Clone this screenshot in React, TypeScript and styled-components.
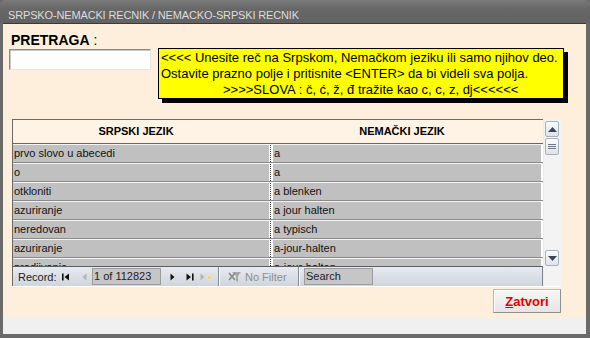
import React from "react";
import styled, { createGlobalStyle } from "styled-components";

const Global = createGlobalStyle`
  html, body { margin: 0; padding: 0; background: #6b6b6b; }
  body { font-family: "Liberation Sans", Arial, sans-serif; }
`;

const Window = styled.div`
  width: 590px;
  height: 338px;
  display: flex;
  flex-direction: column;
  background: #6a6a6a;
  border-radius: 5px 5px 0 0;
  overflow: hidden;
`;

const TitleBar = styled.div`
  height: 23px;
  box-sizing: border-box;
  padding: 9px 0 0 8px;
  font-size: 11px;
  letter-spacing: -0.15px;
  line-height: 13px;
  color: #dcdcdc;
  background: linear-gradient(#7a7a7a, #676767 40%, #626262);
  white-space: nowrap;
`;

const Client = styled.div`
  flex: 1;
  display: flex;
  flex-direction: column;
  margin: 0 4px 4px 3px;
  border-top: 1px solid #3a3a3a;
`;

const Content = styled.div`
  flex: 1;
  display: flex;
  flex-direction: column;
  background: #fdefdc;
  padding-top: 8px;
`;

const Footer = styled.div`
  height: 16px;
  background: #f0f0f0;
`;

const TopRow = styled.div`
  display: flex;
  align-items: flex-start;
  margin-left: 6px;
`;

const LeftCol = styled.div`
  width: 142px;
  display: flex;
  flex-direction: column;
`;

const Label = styled.div`
  margin-left: 2px;
  height: 16px;
  font-size: 14px;
  line-height: 16px;
  color: #000;
  white-space: nowrap;
  b { font-weight: bold; }
`;

const SearchInput = styled.input`
  margin-top: 1px;
  width: 142px;
  height: 21px;
  box-sizing: border-box;
  border: 1px solid #e4e4e4;
  border-top-color: #8a8a8a;
  border-left-color: #8a8a8a;
  box-shadow: inset 1px 1px 0 #c8c8c8;
  background: #fff;
  outline: none;
  padding: 0 2px;
  font: 12px "Liberation Sans", Arial, sans-serif;
`;

const Notice = styled.div`
  margin: 16px 0 0 7px;
  width: 406px;
  box-sizing: border-box;
  border: 1px solid #000;
  background: #ffff00;
  box-shadow: 4px 4px 0 #000;
  padding: 1px 0 0 2px;
  font-size: 13px;
  line-height: 16px;
  color: #000;
`;

const NoticeLine = styled.div<{ $indent?: number }>`
  white-space: pre;
  padding-left: ${(p) => p.$indent ?? 0}px;
`;

const Sheet = styled.div`
  margin: 20px 0 0 9px;
  width: 549px;
  display: flex;
  border-bottom: 1px solid #ffffff;
`;

const Grid = styled.div`
  width: 531px;
  display: flex;
  flex-direction: column;
  border-left: 1px solid #6a6a6a;
  border-top: 1px solid #6a6a6a;
  box-sizing: border-box;
`;

const cols = "256px 4px 268px 2px";

const Header = styled.div`
  display: grid;
  grid-template-columns: ${cols};
  height: 24px;
  box-sizing: border-box;
  border-bottom: 1px solid #666;
  background: #fef3e4;
`;

const HeadCell = styled.div`
  font-size: 11px;
  font-weight: bold;
  line-height: 23px;
  text-align: center;
  padding-right: 10px;
  color: #000;
  white-space: nowrap;
`;

const Rows = styled.div`
  height: 122px;
  overflow: hidden;
  background: #fff;
`;

const Row = styled.div`
  display: grid;
  grid-template-columns: ${cols};
  height: 19px;
  box-sizing: border-box;
  border-bottom: 1px solid #8a8a8a;
  border-top: 1px solid #f4f4f4;
`;

const Cell = styled.div`
  background: #c0c0c0;
  font-size: 11px;
  line-height: 17px;
  padding-left: 1px;
  color: #111;
  white-space: nowrap;
  overflow: hidden;
`;

const ColSep = styled.div`
  background: linear-gradient(to right, #fff 0 1px, transparent 1px 2px, #fff 2px),
    repeating-linear-gradient(to bottom, #333 0 1px, #fff 1px 2px);
`;

const Tail = styled.div`
  background: #fff;
`;

const NavBar = styled.div`
  height: 20px;
  box-sizing: border-box;
  display: flex;
  align-items: center;
  border-top: 1px solid #5e5e5e;
  border-right: 1px solid #7d8590;
  background: linear-gradient(#e7eaef, #d0d5dc);
  font-size: 11px;
  color: #222;
  white-space: nowrap;
  position: relative;
  z-index: 1;
`;

const RecLabel = styled.div`
  margin-left: 5px;
  width: 44px;
`;

const Glyph = styled.svg<{ $ml: number }>`
  margin-left: ${(p) => p.$ml}px;
  flex: none;
  display: block;
`;

const NavBox = styled.div<{ $ml: number; $w: number }>`
  margin-left: ${(p) => p.$ml}px;
  width: ${(p) => p.$w}px;
  height: 17px;
  box-sizing: border-box;
  border: 1px solid #9d9d9d;
  background: #c6c6c6;
  padding-left: 1px;
  line-height: 15px;
  color: #222;
`;

const NavSep = styled.div<{ $ml: number }>`
  margin-left: ${(p) => p.$ml}px;
  width: 2px;
  height: 19px;
  box-sizing: border-box;
  border-left: 1px solid #858b94;
  border-right: 1px solid #f6f7f9;
`;

const Disabled = styled.div`
  margin-left: 3px;
  width: 53px;
  color: #8e8e8e;
`;

const Scroll = styled.div`
  width: 18px;
  display: flex;
  flex-direction: column;
  background: #f3f3f3;
  border-left: 1px solid #ececec;
  box-sizing: border-box;
`;

const ScrollBtn = styled.div<{ $mt: number; $h: number }>`
  margin: ${(p) => p.$mt}px 0 0 1px;
  width: 14px;
  height: ${(p) => p.$h}px;
  box-sizing: border-box;
  border: 1px solid #a7b0bc;
  border-radius: 2px;
  background: linear-gradient(#fafbfc, #dfe3e9);
  display: flex;
  align-items: center;
  justify-content: center;
`;

const Spacer = styled.div`
  flex: 1;
`;

const ScrollFoot = styled.div`
  height: 20px;
`;

const CloseButton = styled.button`
  align-self: flex-end;
  margin: 2px 25px 0 0;
  width: 68px;
  height: 24px;
  box-sizing: border-box;
  border: 1px solid #b9b9b9;
  border-bottom-color: #8f8f8f;
  border-right-color: #8f8f8f;
  box-shadow: inset 1px 1px 0 #fff;
  background: linear-gradient(#f7f7f7, #e5e5e5);
  color: #e00000;
  font: bold 13px "Liberation Sans", Arial, sans-serif;
  padding: 0;
  u { text-decoration: underline; }
`;

const rows: [string, string][] = [
  ["prvo slovo u abecedi", "a"],
  ["o", "a"],
  ["otkloniti", "a blenken"],
  ["azuriranje", "a jour halten"],
  ["neredovan", "a typisch"],
  ["azuriranje", "a-jour-halten"],
  ["prodjivanje", "a-jour-halten"],
];

export default function App() {
  return (
    <>
      <Global />
      <Window>
        <TitleBar>SRPSKO-NEMACKI RECNIK / NEMACKO-SRPSKI RECNIK</TitleBar>
        <Client>
          <Content>
            <TopRow>
              <LeftCol>
                <Label>
                  <b>PRETRAGA</b> :
                </Label>
                <SearchInput type="text" />
              </LeftCol>
              <Notice>
                <NoticeLine>{"<<<< Unesite reč na Srpskom, Nemačkom jeziku ili samo njihov deo."}</NoticeLine>
                <NoticeLine>{"Ostavite prazno polje i pritisnite <ENTER> da bi videli sva polja."}</NoticeLine>
                <NoticeLine $indent={62}>{">>>>SLOVA : č, ć, ž, đ tražite kao c, c, z, dj<<<<<<"}</NoticeLine>
              </Notice>
            </TopRow>

            <Sheet>
              <Grid>
                <Header>
                  <HeadCell>SRPSKI JEZIK</HeadCell>
                  <div />
                  <HeadCell>NEMAČKI JEZIK</HeadCell>
                  <div />
                </Header>
                <Rows>
                  {rows.map(([sr, de], i) => (
                    <Row key={i}>
                      <Cell>{sr}</Cell>
                      <ColSep />
                      <Cell>{de}</Cell>
                      <Tail />
                    </Row>
                  ))}
                </Rows>
                <NavBar>
                  <RecLabel>Record:</RecLabel>
                  <Glyph $ml={0} width="8" height="8" viewBox="0 0 8 8">
                    <rect x="0" y="0.5" width="1.6" height="7" fill="#111" />
                    <polygon points="7,0.5 2.5,4 7,7.5" fill="#111" />
                  </Glyph>
                  <Glyph $ml={12} width="5" height="8" viewBox="0 0 5 8">
                    <polygon points="4.5,0.5 0.5,4 4.5,7.5" fill="#b4b4b4" />
                  </Glyph>
                  <NavBox $ml={5} $w={69}>1 of 112823</NavBox>
                  <Glyph $ml={9} width="5" height="8" viewBox="0 0 5 8">
                    <polygon points="0.5,0.5 4.5,4 0.5,7.5" fill="#111" />
                  </Glyph>
                  <Glyph $ml={11} width="8" height="8" viewBox="0 0 8 8">
                    <polygon points="0.5,0.5 5,4 0.5,7.5" fill="#111" />
                    <rect x="6" y="0.5" width="1.6" height="7" fill="#111" />
                  </Glyph>
                  <Glyph $ml={6} width="13" height="8" viewBox="0 0 13 8">
                    <polygon points="0.5,0.5 4.5,4 0.5,7.5" fill="#b4b4b4" />
                    <circle cx="9.5" cy="4.5" r="2.6" fill="#f3e3a0" />
                    <circle cx="9.5" cy="4.5" r="1.3" fill="#ead27a" />
                  </Glyph>
                  <NavSep $ml={5} />
                  <Glyph $ml={8} width="14" height="12" viewBox="0 0 14 12">
                    <polygon points="4,1 13,1 10,5 10,11 8,10 8,5" fill="#a8a8a8" />
                    <path d="M1 2 L7 9 M7 2 L1 9" stroke="#8a8a8a" strokeWidth="1.6" />
                  </Glyph>
                  <Disabled>No Filter</Disabled>
                  <NavSep $ml={0} />
                  <NavBox $ml={4} $w={69}>Search</NavBox>
                </NavBar>
              </Grid>
              <Scroll>
                <ScrollBtn $mt={2} $h={16}>
                  <svg width="9" height="5" viewBox="0 0 9 5">
                    <polygon points="0,5 4.5,0 9,5" fill="#3b4555" />
                  </svg>
                </ScrollBtn>
                <ScrollBtn $mt={1} $h={17}>
                  <svg width="8" height="7" viewBox="0 0 8 7">
                    <path d="M0 1.5 H8 M0 3.5 H8 M0 5.5 H8" stroke="#6e7785" strokeWidth="1" />
                  </svg>
                </ScrollBtn>
                <Spacer />
                <ScrollBtn $mt={0} $h={16}>
                  <svg width="9" height="5" viewBox="0 0 9 5">
                    <polygon points="0,0 4.5,5 9,0" fill="#3b4555" />
                  </svg>
                </ScrollBtn>
                <ScrollFoot />
              </Scroll>
            </Sheet>

            <CloseButton type="button">
              <u>Z</u>atvori
            </CloseButton>
          </Content>
          <Footer />
        </Client>
      </Window>
    </>
  );
}
